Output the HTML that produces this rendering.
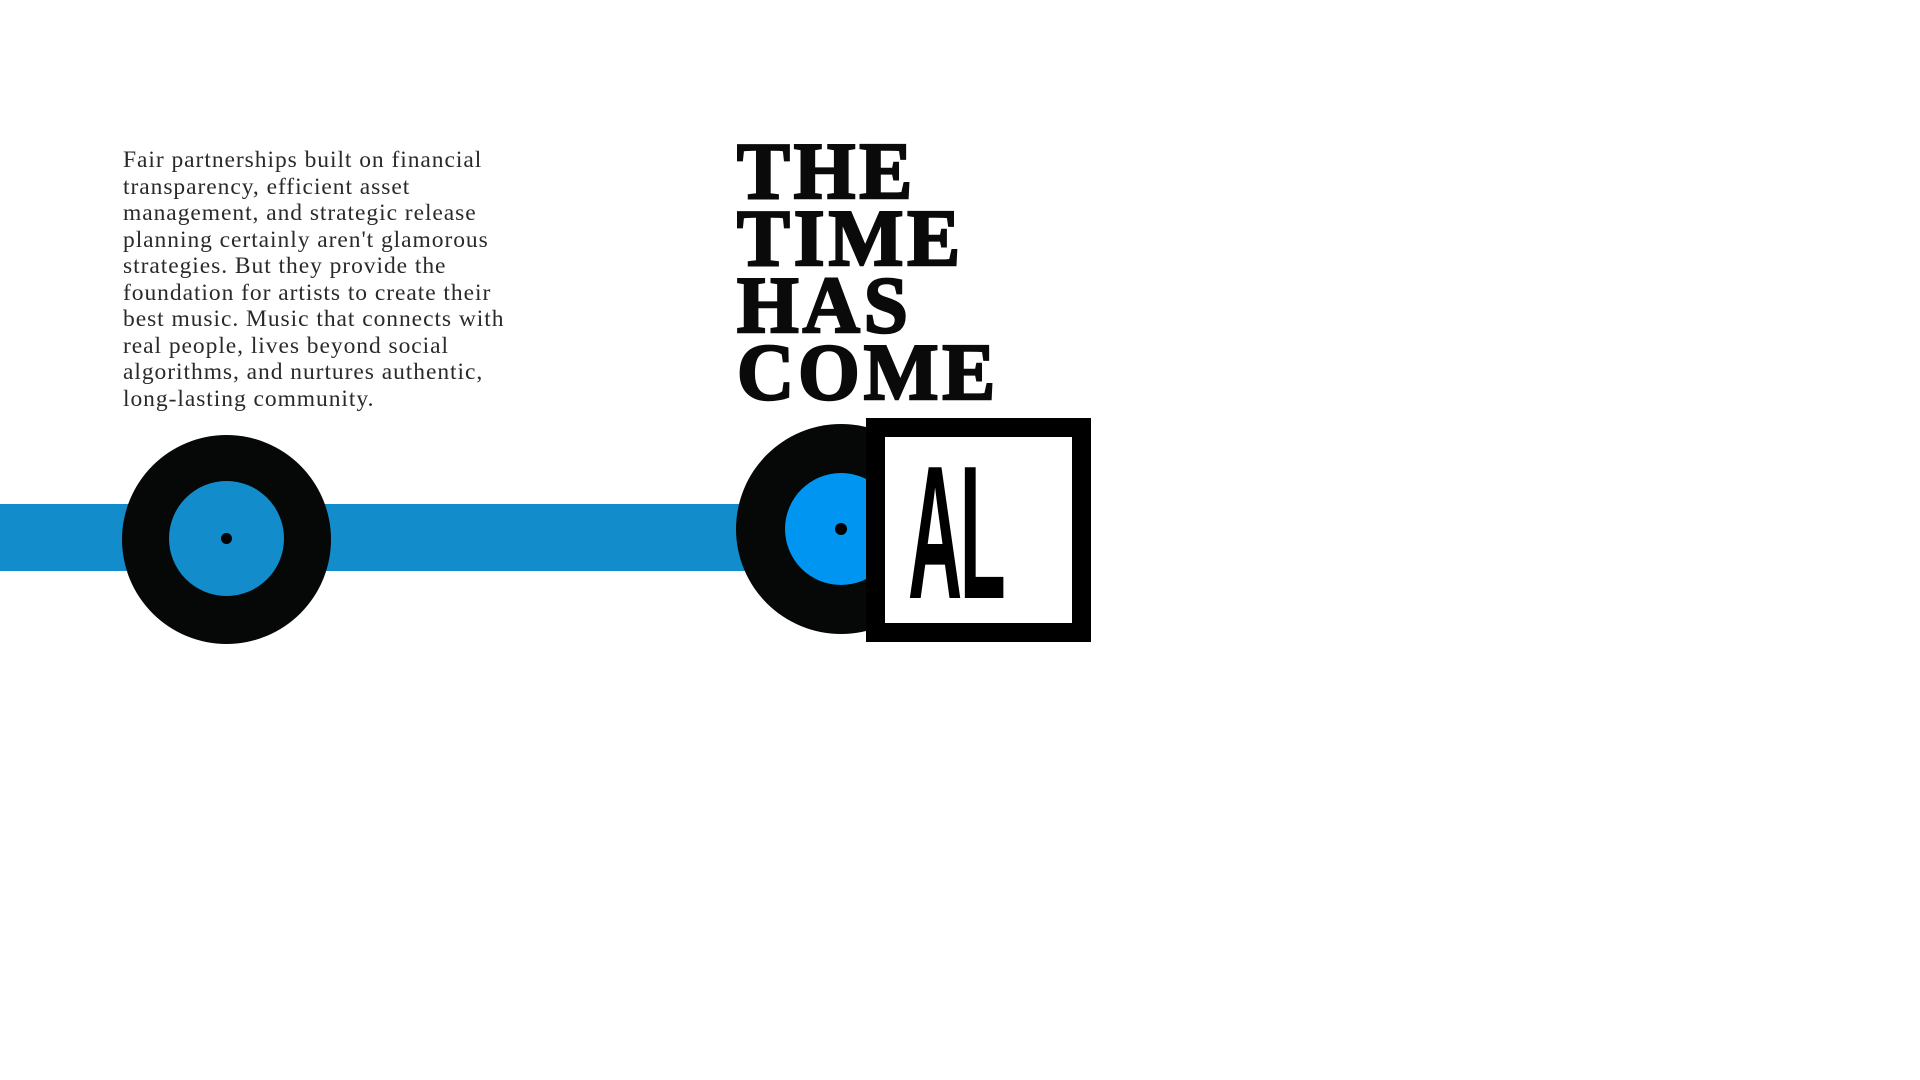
<!DOCTYPE html>
<html><head><meta charset="utf-8"><style>
html,body{margin:0;padding:0;width:1920px;height:1080px;background:#fff;overflow:hidden;position:relative}
.p{position:absolute;left:123px;top:147px;font-family:"Liberation Serif",serif;font-size:23.5px;line-height:26.5px;color:#2a2a2a;letter-spacing:0.95px;white-space:nowrap}
.h{position:absolute;left:737px;top:139px;font-family:"Liberation Serif",serif;font-weight:700;font-size:80px;line-height:67px;color:#0a0a0a;letter-spacing:4px;-webkit-text-stroke:2.5px #0a0a0a;transform:scaleX(0.99);transform-origin:left top}
.bar{position:absolute;left:0;top:504px;width:747px;height:67px;background:#128ccb}
.rec{position:absolute;border-radius:50%;background:#060808}
.in{position:absolute;border-radius:50%}
.hole{position:absolute;width:11px;height:11px;border-radius:50%;background:#000}
.box{position:absolute;left:866px;top:418px;width:187px;height:186px;border:19px solid #000;background:#fff;overflow:hidden}
.al{position:absolute;left:23px;top:1px;font-family:"Liberation Sans",sans-serif;font-weight:700;font-size:190px;line-height:190px;color:#000;transform:scaleX(0.395);transform-origin:left top;letter-spacing:-6px}
</style></head><body>
<div class="p">Fair partnerships built on financial<br>transparency, efficient asset<br>management, and strategic release<br>planning certainly aren't glamorous<br>strategies. But they provide the<br>foundation for artists to create their<br>best music. Music that connects with<br>real people, lives beyond social<br>algorithms, and nurtures authentic,<br>long-lasting community.</div>
<div class="h">THE<br>TIME<br>HAS<br>COME</div>
<div class="bar"></div>
<div class="rec" style="left:122px;top:435px;width:209px;height:209px"></div>
<div class="in" style="left:169px;top:481px;width:115px;height:115px;background:#128ccb"></div>
<div class="hole" style="left:221px;top:533px"></div>
<div class="rec" style="left:736px;top:424px;width:210px;height:210px"></div>
<div class="in" style="left:785px;top:473px;width:112px;height:112px;background:#0095f0"></div>
<div class="hole" style="left:835px;top:523px;width:12px;height:12px"></div>
<div class="box"><div class="al">AL</div></div>
</body></html>
